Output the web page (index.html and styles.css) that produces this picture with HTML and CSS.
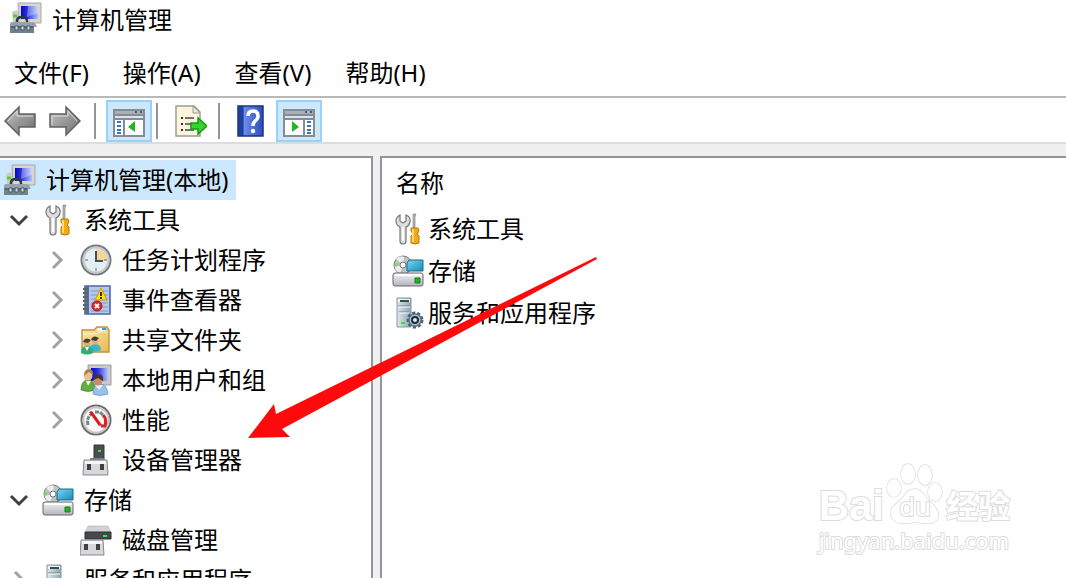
FILE: index.html
```html
<!DOCTYPE html>
<html lang="zh-CN">
<head>
  <meta charset="UTF-8" />
  <meta name="viewport" content="width=device-width, initial-scale=1.0"/>
  <title>计算机管理</title>
  <link rel="stylesheet" href="styles.css">
</head>
<body>

  <!-- shared icons -->
  <svg class="sprite" aria-hidden="true">
    <defs>
      <linearGradient id="g-screen" x1="0" y1="0" x2="1" y2="0">
        <stop offset="0" stop-color="#0a0ab8"/><stop offset=".4" stop-color="#2a35e0"/><stop offset="1" stop-color="#b4c4fa"/>
      </linearGradient>
      <linearGradient id="g-metal" x1="0" y1="0" x2="0" y2="1">
        <stop offset="0" stop-color="#f4f4f8"/><stop offset="1" stop-color="#b4b4bc"/>
      </linearGradient>
      <linearGradient id="g-arrow" x1="0" y1="0" x2="1" y2="1">
        <stop offset="0" stop-color="#c4c4c4"/><stop offset="1" stop-color="#6e6e6e"/>
      </linearGradient>
      <linearGradient id="g-help" x1="0" y1="0" x2="1" y2="0">
        <stop offset="0" stop-color="#2140a4"/><stop offset=".2" stop-color="#2140a4"/><stop offset=".25" stop-color="#6c8ce8"/><stop offset="1" stop-color="#2c4cc0"/>
      </linearGradient>
      <linearGradient id="g-folder" x1="0" y1="0" x2="1" y2="1">
        <stop offset="0" stop-color="#fdeaa8"/><stop offset="1" stop-color="#e8b858"/>
      </linearGradient>
      <linearGradient id="g-server" x1="0" y1="0" x2="1" y2="0">
        <stop offset="0" stop-color="#dce8ee"/><stop offset="1" stop-color="#8ea4b0"/>
      </linearGradient>
      <linearGradient id="g-blue" x1="0" y1="0" x2="1" y2="1">
        <stop offset="0" stop-color="#7ed4ee"/><stop offset="1" stop-color="#168cb8"/>
      </linearGradient>
    </defs>

    <symbol id="i-computer" viewBox="0 0 32 32">
      <path d="M8 1h23v20H9z" fill="#d8d6d0" stroke="#a8a8a4"/>
      <path d="M11 4h17v13H11z" fill="url(#g-screen)"/>
      <path d="M18 4h10v7L17 15z" fill="#fff" opacity=".3"/>
      <path d="M17 21h8l2 4h-9z" fill="#a0a09c"/>
      <path d="M2 10l5-2 3 12H3z" fill="#c8ccc8"/>
      <path d="M3 14h4" stroke="#4fd22c" stroke-width="3"/>
      <path d="M7 21v-2q0-4 5-4t5 4v2" fill="none" stroke="#30383e" stroke-width="2.500"/>
      <path d="M1 20h22l1 3v8H0v-8z" fill="#6f818c"/>
      <path d="M1 20h22l1 4H0z" fill="#94a4ac"/>
      <path d="M1 25h22" stroke="#3e4d56"/>
      <path d="M5 24h3v4H5zM11 24h3v4h-3zM17 24h3v4h-3z" fill="#d8e0e2" stroke="#4a5860"/>
    </symbol>

    <symbol id="i-tools" viewBox="0 0 32 32">
      <path d="M8 2v6l3 2 3-2V2q5 2 4 7-1 4-4 5v14q0 3-3 3t-3-3V14q-4-2-4-6 0-4 4-6z" fill="#dededf" stroke="#77777a" stroke-width="1.200"/>
      <path d="M11 14v14" stroke="#fff" stroke-width="2"/>
      <path d="M21 1h3l-1 3v11h-2V4z" fill="#b8b8bc" stroke="#77777a" stroke-width=".6"/>
      <path d="M19 15h7l1 3-2 3 2 2v7q-4 2-8 0v-7l2-2-2-3z" fill="#f4aa12" stroke="#b87808"/>
      <path d="M21 16v13" stroke="#ffdb70" stroke-width="2"/>
    </symbol>

    <symbol id="i-clock" viewBox="0 0 32 32">
      <circle cx="16" cy="16" r="14.5" fill="#f4f6f6" stroke="#74787a" stroke-width="2"/>
      <circle cx="16" cy="16" r="12.5" fill="#e4eef4" stroke="#c4c8ca" stroke-width="2"/>
      <path d="M16 16V5a11 11 0 0 1 11 12z" fill="#f6d49a"/>
      <path d="M16 7v10h7" fill="none" stroke="#455058" stroke-width="2"/>
      <path d="M16 24v3M5 16h3M24 16h3" stroke="#8a98a0" stroke-width="1.5"/>
    </symbol>

    <symbol id="i-events" viewBox="0 0 32 32">
      <path d="M5 2h25v28H5z" fill="#b4c8ee" stroke="#4a68a8" stroke-width="1.6"/>
      <path d="M5 2h4v28H5z" fill="#586c94"/>
      <path d="M11 7h17M11 11h17M11 15h17M11 19h17M11 23h17M11 27h17" stroke="#8298c4"/>
      <path d="M3 5h5M3 9h5M3 13h5M3 17h5M3 21h5M3 25h5" stroke="#5c6470" stroke-width="2"/>
      <path d="M21 4l6 12H15z" fill="#ffdc16" stroke="#c49a00"/>
      <path d="M21 8v4M21 13v2" stroke="#333" stroke-width="2"/>
      <circle cx="17" cy="22" r="5" fill="#e02a30" stroke="#ad1420"/>
      <path d="M15 20l4 4m0-4l-4 4" stroke="#fff" stroke-width="1.800"/>
    </symbol>

    <symbol id="i-shared" viewBox="0 0 32 32">
      <path d="M2 6h12l3-3h10l2 3v22H2z" fill="url(#g-folder)" stroke="#c0943c" stroke-width="1.4"/>
      <path d="M18 4h7v3h-8z" fill="#fff"/>
      <path d="M22 5h4" stroke="#3c9cc8" stroke-width="2"/>
      <path d="M3 10h13l3-2h9" fill="none" stroke="#fff2c4"/>
      <path d="M9 27q0-7 6-7t6 6q-6 3-12 1z" fill="#3cb4c4"/>
      <circle cx="15" cy="17" r="3.400" fill="#e4ae80"/>
      <path d="M11 16q2-6 8-2l-3 3z" fill="#403c38"/>
      <path d="M1 29q0-7 6-7t6 7q-6 3-12 0z" fill="#2cae78"/>
      <path d="M5 23l2 4 2-4z" fill="#fff"/>
      <circle cx="7" cy="19" r="3.600" fill="#deaa80"/>
      <path d="M3 18q2-6 8-2l-3 3z" fill="#504238"/>
    </symbol>

    <symbol id="i-users" viewBox="0 0 32 32">
      <path d="M8 1h23v20H9z" fill="#cccac8" stroke="#9c9c9c"/>
      <path d="M11 4h17v13H11z" fill="url(#g-screen)"/>
      <path d="M1 26q0-10 7-10t7 10q-7 3-14 0z" fill="#62ac42" stroke="#3c7a28" stroke-width=".6"/>
      <path d="M6 17l2 5 3-5z" fill="#e8f4dc"/>
      <circle cx="8" cy="12" r="4.500" fill="#e8c294"/>
      <path d="M4 12q0-7 5-7 5 1 4 6l-4-3-4 3z" fill="#a88444"/>
      <path d="M13 30q0-10 7-10t8 10q-8 3-15 0z" fill="#98c0ea" stroke="#5c84b4" stroke-width=".6"/>
      <path d="M15 21l4 5 4-5z" fill="#eaf4ff"/>
      <circle cx="18" cy="17" r="4.500" fill="#c88c68"/>
      <path d="M14 16q0-6 5-6 5 1 4 7l-5-3z" fill="#4c342a"/>
    </symbol>

    <symbol id="i-perf" viewBox="0 0 32 32">
      <circle cx="16" cy="16" r="14.500" fill="#fff" stroke="#6c6c6c" stroke-width="2"/>
      <circle cx="16" cy="16" r="12.500" fill="#fbfbfb" stroke="#c8c8c8" stroke-width="2"/>
      <path d="M8 21q-2-8 4-11M15 8h5l3 3" fill="none" stroke="#6c8c80" stroke-width="3" stroke-dasharray="4 1"/>
      <path d="M23 11q4 4 2 11h-4" fill="none" stroke="#e01e24" stroke-width="3"/>
      <path d="M9 8l3-1 10 14-3 1z" fill="#de1620"/>
    </symbol>

    <symbol id="i-device" viewBox="0 0 32 32">
      <path d="M14 1h10v15H14z" fill="#4a4e50" stroke="#303436"/>
      <path d="M10 14h14v3H10z" fill="#787c80"/>
      <path d="M18 6h3v2h-3z" fill="#36e43a"/>
      <path d="M4 16h23l1 15H3z" fill="#d8d8da" stroke="#88888c"/>
      <path d="M5 17h21v3H5z" fill="#f6f6f6"/>
      <path d="M7 20h4v6H7zM20 20h4v6h-4z" fill="#3e4042"/>
    </symbol>

    <symbol id="i-storage" viewBox="0 0 32 32">
      <circle cx="11" cy="10" r="9" fill="#c0c2c2" stroke="#74787a"/>
      <path d="M11 10L4 4q4-4 8-2zM11 10l-3 8q-5-2-5-6z" fill="#eceeee"/>
      <path d="M2 9l5-1-5 5z" fill="#7cd468"/>
      <circle cx="11" cy="10" r="3" fill="#fff" stroke="#74787a"/>
      <path d="M17 5h14v11H15V8z" fill="url(#g-blue)" stroke="#126c90"/>
      <path d="M1 20q0-2 2-2h26q2 0 2 2v9q0 2-2 2H3q-2 0-2-2z" fill="url(#g-metal)" stroke="#66666c"/>
      <path d="M3 20h26" stroke="#fff" stroke-width="2"/>
      <path d="M23 23h5v5h-5z" fill="#22b624" stroke="#187a1a"/>
    </symbol>

    <symbol id="i-disk" viewBox="0 0 32 32">
      <path d="M8 2h20l3 7H5z" fill="#d2d2d4" stroke="#b0b0b4" stroke-width=".6"/>
      <path d="M5 8h26v7H5z" fill="#45494c" stroke="#2c3032"/>
      <path d="M23 11h4v2h-4z" fill="#34e838"/>
      <path d="M1 16h22l1 15H0z" fill="#d8d8da" stroke="#88888c"/>
      <path d="M2 17h20v3H2z" fill="#f6f6f6"/>
      <path d="M4 20h4v6H4zM16 20h4v6h-4z" fill="#3e4042"/>
    </symbol>

    <symbol id="i-services" viewBox="0 0 32 32">
      <path d="M5 1h14v29H5z" fill="url(#g-server)" stroke="#8698a2"/>
      <path d="M6 2h12v3H6z" fill="#f0f6f8"/>
      <path d="M8 4h9" stroke="#3c4c54" stroke-width="2"/>
      <path d="M6 9h12M7 15h10" stroke="#6c7c84"/>
      <path d="M6 10h12M7 16h10" stroke="#fff"/>
      <path d="M9 26h4" stroke="#4ad838" stroke-width="2"/>
      <circle cx="23" cy="23" r="7" fill="#7c94a6" stroke="#4c6272" stroke-width="3" stroke-dasharray="3 2"/>
      <circle cx="23" cy="23" r="6" fill="#a8bfd0" stroke="#526a7c"/>
      <circle cx="23" cy="23" r="3" fill="#dce8f0" stroke="#1d2c38" stroke-width="2"/>
    </symbol>

    <symbol id="i-open" viewBox="0 0 20 20">
      <path d="M2 6l8 8 8-8" fill="none" stroke="#404040" stroke-width="3"/>
    </symbol>
    <symbol id="i-closed" viewBox="0 0 20 20">
      <path d="M6 2l8 8-8 8" fill="none" stroke="#a2a2a2" stroke-width="3"/>
    </symbol>
  </svg>

  <header class="title-bar">
    <svg class="icon"><use href="#i-computer"/></svg>
    <h1>计算机管理</h1>
  </header>

  <nav class="menu-bar">
    <button type="button">文件(F)</button>
    <button type="button">操作(A)</button>
    <button type="button">查看(V)</button>
    <button type="button">帮助(H)</button>
  </nav>

  <div class="toolbar">
    <button type="button" class="nav-btn" aria-label="后退">
      <svg class="icon" viewBox="0 0 32 32"><path d="M1 16L15 2v7h16v13H15v8z" fill="url(#g-arrow)" stroke="#606060" stroke-width="1.500"/><path d="M4 16l9-10v5h16" fill="none" stroke="#ddd"/></svg>
    </button>
    <button type="button" class="nav-btn" aria-label="前进">
      <svg class="icon" viewBox="0 0 32 32"><path d="M31 16L17 2v7H1v13h16v8z" fill="url(#g-arrow)" stroke="#606060" stroke-width="1.500"/><path d="M3 20v-9h16V6l9 10" fill="none" stroke="#ddd"/></svg>
    </button>
    <span class="separator"></span>
    <button type="button" class="tool-btn active" aria-label="显示/隐藏控制台树">
      <svg class="icon" viewBox="0 0 32 32">
        <path d="M1 5h30v26H1z" fill="#fff" stroke="#858c96" stroke-width="2"/>
        <path d="M2 6h28v3H2z" fill="#a9b0ba"/><path d="M22 7h2M27 7h2" stroke="#4e5a70" stroke-width="2"/>
        <path d="M2 10h28M2 14h28" stroke="#858c96" stroke-width="2"/><path d="M2 12h28" stroke="#dce2ea" stroke-width="2"/>
        <path d="M11 14v16" stroke="#858c96" stroke-width="2"/>
        <path d="M4 17h4M4 21h4M4 25h4M4 28h4" stroke="#3976c0" stroke-width="2"/>
        <path d="M22 16v11l-7-5z" fill="#22b526"/>
      </svg>
    </button>
    <span class="separator"></span>
    <button type="button" class="tool-btn" aria-label="导出列表">
      <svg class="icon" viewBox="0 0 32 32">
        <path d="M1 1h18l6 6v24H1z" fill="#fcf5de" stroke="#a09c90" stroke-width="1.500"/><path d="M18 1v7h7z" fill="#e8e8e6" stroke="#a09c90"/>
        <path d="M6 13h2M6 19h2M6 25h2" stroke="#333" stroke-width="2"/><path d="M10 13h9M10 19h7M10 25h9" stroke="#77736c" stroke-width="2"/>
        <path d="M16 18h7v-5l9 8-9 8v-5h-7z" fill="#36d42e" stroke="#159a18" stroke-width="1.500"/>
      </svg>
    </button>
    <span class="separator"></span>
    <button type="button" class="tool-btn" aria-label="帮助">
      <svg class="icon" viewBox="0 0 32 32">
        <path d="M1 1h25v30H1z" fill="url(#g-help)" stroke="#1c347c" stroke-width="1.500"/>
        <path d="M11 11q0-5 5-5t5 5q0 3-3 5-2 2-2 5" fill="none" stroke="#fff" stroke-width="3.500"/><circle cx="16" cy="26" r="2.200" fill="#fff"/>
      </svg>
    </button>
    <button type="button" class="tool-btn active" aria-label="显示/隐藏操作窗格">
      <svg class="icon" viewBox="0 0 32 32">
        <path d="M1 5h30v26H1z" fill="#fff" stroke="#858c96" stroke-width="2"/>
        <path d="M2 6h28v3H2z" fill="#a9b0ba"/><path d="M22 7h2M27 7h2" stroke="#4e5a70" stroke-width="2"/>
        <path d="M2 10h28M2 14h28" stroke="#858c96" stroke-width="2"/><path d="M2 12h28" stroke="#dce2ea" stroke-width="2"/>
        <path d="M21 14v16" stroke="#858c96" stroke-width="2"/>
        <path d="M24 17h4M24 21h4M24 25h4M24 28h4" stroke="#3976c0" stroke-width="2"/>
        <path d="M9 16v11l7-5z" fill="#22b526"/>
      </svg>
    </button>
  </div>

  <main class="panes">
    <section class="pane tree-pane">
      <a href="#" class="node root selected"><svg class="icon"><use href="#i-computer"/></svg>计算机管理(本地)</a>
      <ul class="tree">
        <li>
          <div class="row">
            <button type="button" class="toggle" aria-label="折叠"><svg><use href="#i-open"/></svg></button>
            <a href="#" class="node"><svg class="icon"><use href="#i-tools"/></svg>系统工具</a>
          </div>
          <ul>
            <li class="row">
              <button type="button" class="toggle" aria-label="展开"><svg><use href="#i-closed"/></svg></button>
              <a href="#" class="node"><svg class="icon"><use href="#i-clock"/></svg>任务计划程序</a>
            </li>
            <li class="row">
              <button type="button" class="toggle" aria-label="展开"><svg><use href="#i-closed"/></svg></button>
              <a href="#" class="node"><svg class="icon"><use href="#i-events"/></svg>事件查看器</a>
            </li>
            <li class="row">
              <button type="button" class="toggle" aria-label="展开"><svg><use href="#i-closed"/></svg></button>
              <a href="#" class="node"><svg class="icon"><use href="#i-shared"/></svg>共享文件夹</a>
            </li>
            <li class="row">
              <button type="button" class="toggle" aria-label="展开"><svg><use href="#i-closed"/></svg></button>
              <a href="#" class="node"><svg class="icon"><use href="#i-users"/></svg>本地用户和组</a>
            </li>
            <li class="row">
              <button type="button" class="toggle" aria-label="展开"><svg><use href="#i-closed"/></svg></button>
              <a href="#" class="node"><svg class="icon"><use href="#i-perf"/></svg>性能</a>
            </li>
            <li class="row leaf">
              <a href="#" class="node"><svg class="icon"><use href="#i-device"/></svg>设备管理器</a>
            </li>
          </ul>
        </li>
        <li>
          <div class="row">
            <button type="button" class="toggle" aria-label="折叠"><svg><use href="#i-open"/></svg></button>
            <a href="#" class="node"><svg class="icon"><use href="#i-storage"/></svg>存储</a>
          </div>
          <ul>
            <li class="row leaf">
              <a href="#" class="node"><svg class="icon"><use href="#i-disk"/></svg>磁盘管理</a>
            </li>
          </ul>
        </li>
        <li class="row">
          <button type="button" class="toggle" aria-label="展开"><svg><use href="#i-closed"/></svg></button>
          <a href="#" class="node"><svg class="icon"><use href="#i-services"/></svg>服务和应用程序</a>
        </li>
      </ul>
    </section>

    <section class="pane list-pane">
      <table>
        <thead>
          <tr><th>名称</th></tr>
        </thead>
        <tbody>
          <tr><td><a href="#"><svg class="icon"><use href="#i-tools"/></svg>系统工具</a></td></tr>
          <tr><td><a href="#"><svg class="icon"><use href="#i-storage"/></svg>存储</a></td></tr>
          <tr><td><a href="#"><svg class="icon"><use href="#i-services"/></svg>服务和应用程序</a></td></tr>
        </tbody>
      </table>
    </section>
  </main>

  <svg class="pointer" viewBox="0 0 350 182" aria-hidden="true">
    <path d="M348 0l1 2L34 172l8 8-42 1 26-34 2 10z" fill="#ff0a0c"/>
  </svg>

  <div class="watermark">
    <div class="brand">
      <span class="bai">Bai</span>
      <span class="paw">
        <svg viewBox="0 0 58 62" aria-hidden="true">
          <g fill="#fff" stroke="#dcdcdc" stroke-width="1.500">
            <ellipse cx="8" cy="26" rx="7" ry="9"/><ellipse cx="22" cy="12" rx="7" ry="10"/>
            <ellipse cx="39" cy="13" rx="7" ry="10"/><ellipse cx="49" cy="30" rx="7" ry="9"/>
            <path d="M29 27q6 0 10 7 5 6 10 11 8 11-3 16-8 1-17-1-8 2-15 1-12-3-8-15l13-13q4-6 10-6z"/>
          </g>
        </svg>
        <span class="du">du</span>
      </span>
      <span class="jingyan">经验</span>
    </div>
    <div class="domain">jingyan.baidu.com</div>
  </div>

</body>
</html>
```
FILE: styles.css
```css
* {
  margin: 0;
  padding: 0;
  box-sizing: border-box;
}

body {
  position: relative;
  display: flex;
  flex-direction: column;
  height: 100vh;
  overflow: hidden;
  background: #fff;
  color: #000;
  font-family: "Noto Sans", "Noto Sans CJK SC", sans-serif;
  font-size: 24px;
  line-height: 40px;
}

.sprite {
  position: absolute;
  width: 0;
  height: 0;
}

.icon {
  flex: none;
  width: 32px;
  height: 32px;
}

button {
  border: none;
  background: none;
  font: inherit;
  color: inherit;
}

a {
  color: inherit;
  text-decoration: none;
}

ul {
  list-style: none;
}

/* title and menu */
.title-bar {
  display: flex;
  align-items: center;
  gap: 10px;
  height: 38px;
  padding: 0 10px 2px;
}

.title-bar h1 {
  padding-top: 4px;
  font-size: 24px;
  font-weight: normal;
}

.menu-bar {
  display: flex;
  gap: 34px;
  padding: 15px 14px 3px;
  border-bottom: 2px solid #b9b9b9;
}

/* toolbar */
.toolbar {
  display: flex;
  align-items: center;
  height: 46px;
  padding-top: 2px;
  border-bottom: 2px solid #dcdcdc;
}

.nav-btn,
.tool-btn {
  display: flex;
  align-items: center;
  justify-content: center;
  width: 46px;
  height: 42px;
}

.nav-btn {
  width: 40px;
  margin-right: 5px;
}

.tool-btn.active {
  background: #cce8ff;
  border: 2px solid #99d1f8;
}

.separator {
  width: 2px;
  height: 36px;
  margin: 0 10px 0 4px;
  background: #969696;
}

/* panes */
.panes {
  display: grid;
  grid-template-columns: 35% 1fr;
  gap: 7px;
  flex: 1;
  min-height: 0;
  padding-top: 12px;
  background: #f0f0f0;
}

.pane {
  overflow: hidden;
  min-height: 0;
  background: #fff;
  border-top: 2px solid #94949a;
  white-space: nowrap;
}

.tree-pane {
  padding-top: 2px;
  border-right: 2px solid #94949a;
}

.list-pane {
  border-left: 2px solid #94949a;
}

.tree ul {
  padding-left: 38px;
}

.row {
  display: flex;
  height: 40px;
}

.row.leaf {
  padding-left: 38px;
}

.toggle {
  display: flex;
  align-items: center;
  justify-content: center;
  width: 38px;
}

.toggle svg {
  width: 20px;
  height: 20px;
}

.node {
  display: inline-flex;
  align-items: center;
  gap: 10px;
  height: 40px;
  padding: 0 8px 0 4px;
}

.node.root {
  display: flex;
  width: fit-content;
}

.node.selected {
  background: #cce8ff;
}

/* item list */
table {
  width: 100%;
  border-collapse: collapse;
}

th {
  height: 50px;
  padding-left: 14px;
  font-weight: normal;
  text-align: left;
}

td a {
  display: flex;
  align-items: center;
  gap: 4px;
  height: 42px;
  padding-left: 10px;
}

/* overlays */
.pointer {
  position: absolute;
  left: 248px;
  top: 257px;
  width: 350px;
  height: 182px;
}

.watermark {
  position: absolute;
  right: 56px;
  bottom: 22px;
  color: #fff;
  -webkit-text-stroke: 2px #dcdcdc;
  paint-order: stroke fill;
}

.brand {
  display: flex;
  align-items: flex-end;
  gap: 2px;
  line-height: 36px;
}

.bai {
  font-family: "Liberation Sans", sans-serif;
  font-size: 42px;
  font-weight: bold;
}

.paw {
  display: grid;
  width: 58px;
}

.paw svg,
.du {
  grid-area: 1 / 1;
}

.du {
  align-self: end;
  text-align: center;
  font-size: 26px;
}

.jingyan {
  font-size: 32px;
  font-weight: bold;
}

.domain {
  font-size: 22px;
  line-height: 32px;
}
```
